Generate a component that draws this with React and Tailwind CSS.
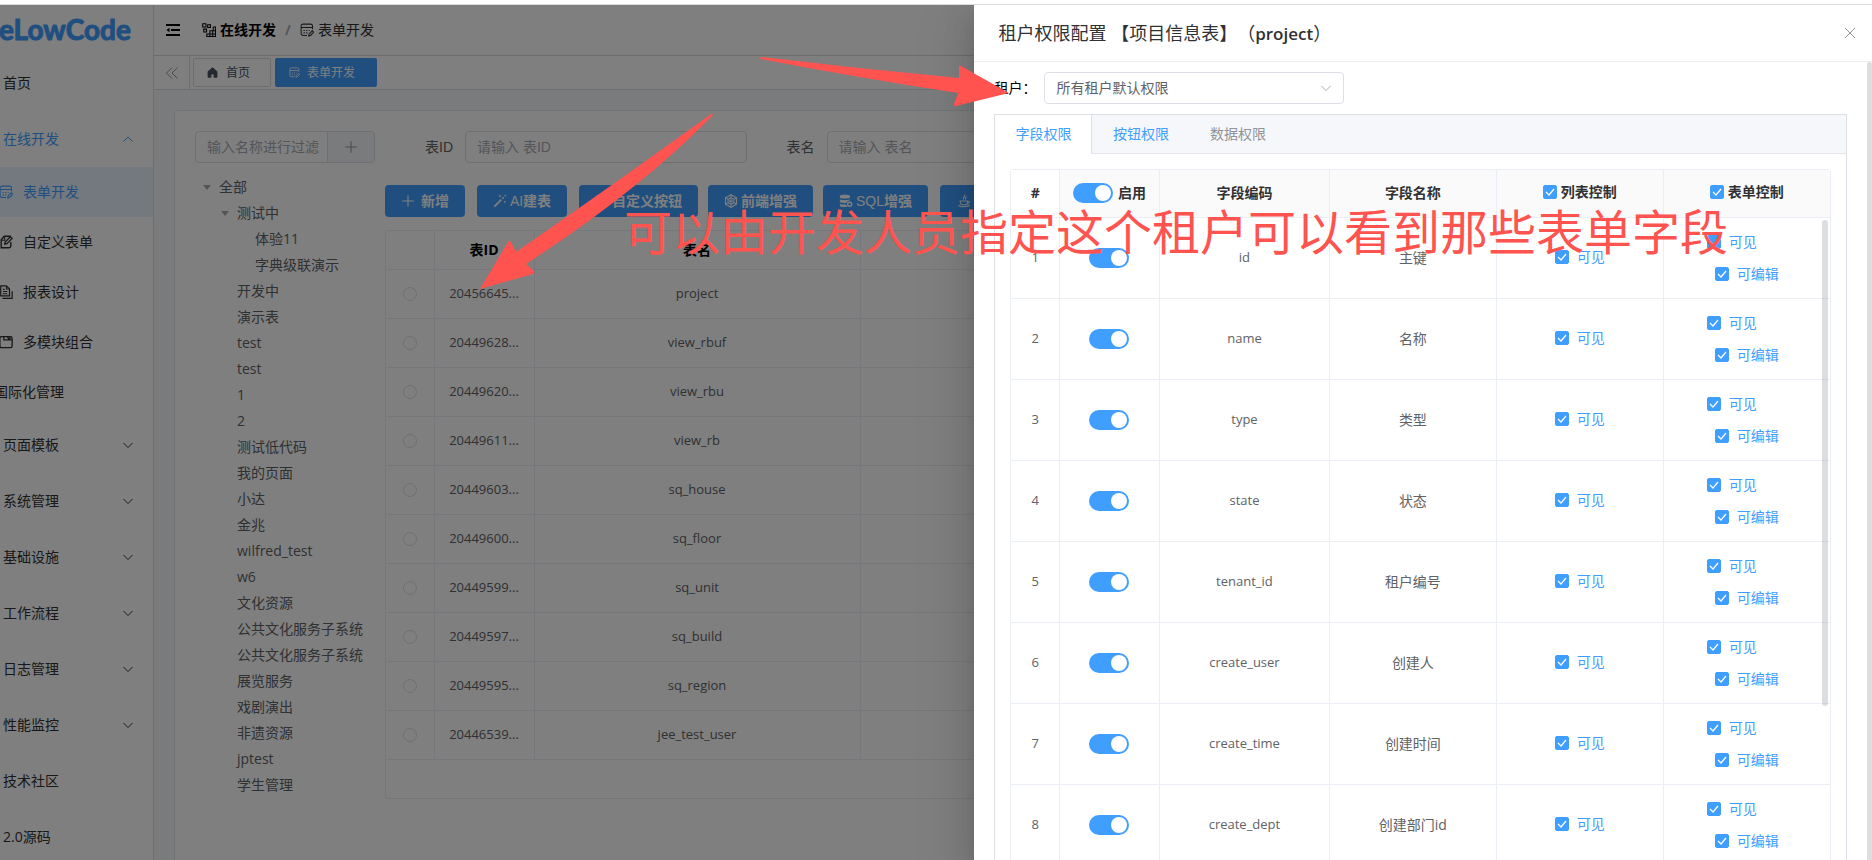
import React, { useState } from "react";

const SIDEBAR_TOP = [
  { name: "表单开发", icon: "form", active: true },
  { name: "自定义表单", icon: "edit" },
  { name: "报表设计", icon: "report" },
  { name: "多模块组合", icon: "module" },
];

const SIDEBAR_REST = [
  { name: "页面模板", arrow: true },
  { name: "系统管理", arrow: true },
  { name: "基础设施", arrow: true },
  { name: "工作流程", arrow: true },
  { name: "日志管理", arrow: true },
  { name: "性能监控", arrow: true },
  { name: "技术社区" },
  { name: "2.0源码" },
];

const TREE = [
  "开发中", "演示表", "test", "test", "1", "2", "测试低代码", "我的页面", "小达", "金兆",
  "wilfred_test", "w6", "文化资源", "公共文化服务子系统", "公共文化服务子系统",
  "展览服务", "戏剧演出", "非遗资源", "jptest", "学生管理",
];

const TABLES = [
  ["20456645...", "project"],
  ["20449628...", "view_rbuf"],
  ["20449620...", "view_rbu"],
  ["20449611...", "view_rb"],
  ["20449603...", "sq_house"],
  ["20449600...", "sq_floor"],
  ["20449599...", "sq_unit"],
  ["20449597...", "sq_build"],
  ["20449595...", "sq_region"],
  ["20446539...", "jee_test_user"],
];

const FIELDS = [
  ["id", "主键"],
  ["name", "名称"],
  ["type", "类型"],
  ["state", "状态"],
  ["tenant_id", "租户编号"],
  ["create_user", "创建人"],
  ["create_time", "创建时间"],
  ["create_dept", "创建部门id"],
];

const BUTTONS = [
  { name: "新增", icon: "plus", cls: "w-20 mr-3" },
  { prefix: "AI", name: "建表", icon: "wand", cls: "w-[90px] mr-3" },
  { name: "自定义按钮", icon: "button", cls: "w-[119px] mr-[10px]" },
  { name: "前端增强", icon: "hex", cls: "w-[105px] mr-[10px]" },
  { prefix: "SQL", name: "增强", icon: "sql", cls: "w-[105px] mr-3" },
  { prefix: "JAVA", name: "增强", icon: "java", cls: "w-[112px]" },
];

const ICONS = {
  form: (
    <>
      <path d="M14.300 7V3.500A2.200 2.200 0 0 0 12.100 1.300H3.500A2.200 2.200 0 0 0 1.300 3.500v8.500a2.200 2.200 0 0 0 2.200 2.200H8" />
      <path d="M1.500 5.200h12.500M4 8.500h1.500M7 8.500h1.500M10 8.500h1M4 11.300h1.500M7 11.300h1.500" />
      <path d="m10 14.800.4-2.300 3.600-3.600 1.500 1.500-3.400 3.800z" />
    </>
  ),
  edit: (
    <>
      <path d="M13.500 8v4.500a2 2 0 0 1-2 2h-9V5.500l3.500-4h7.500" strokeWidth="1.600" />
      <path d="M6.500 10.500 7 8l6-6 2 2-6 6z" strokeWidth="1.500" />
      <path d="M3 6h3.500V2" />
    </>
  ),
  report: (
    <>
      <path d="M2 1h6.500L12 4.500V12.500H2z" strokeWidth="1.400" />
      <path d="M8.500 1v3.500H12M4.500 5h2M4.500 7.500h5M4.500 10h5" />
      <path d="M4 15.200h11V7" strokeWidth="1.400" />
    </>
  ),
  module: (
    <>
      <rect x="1" y="1.800" width="14" height="12.600" rx="1.800" strokeWidth="1.500" />
      <path d="M5.500 2v3.500h9.300M9.500 2l2.500 3.500M12.500 2v3" strokeWidth="1.500" />
    </>
  ),
  crumb: (
    <>
      <path d="M.8.800h3.700v3.700H.8zM6.500 2h3.200v3.200H6.500zM2 7h3.200v3.200H2z" />
      <path d="M12.800 4.500h2.700v11H5.500v-3h10M9 15.500V8.800h6.500M12.300 15.500V8.800" />
      <path d="M12.800 8.500v-4" />
    </>
  ),
  home: <path d="M8 1 1.500 6.500v8.500h4.300v-5h4.400v5h4.300V6.500z" fill="currentColor" />,
  plus: <path d="M8 1.500v13M1.500 8h13" />,
  wand: (
    <>
      <path d="M1.500 14.500 9.500 6.500" strokeWidth="2" />
      <path d="m10.800 5.200 1.400-1.400" strokeWidth="2" />
      <path d="M8 1v2.600M6.700 2.300h2.600M13.500 8v2M12.500 9h2M14 .8v2M13 1.800h2" strokeWidth="0.900" />
    </>
  ),
  button: (
    <>
      <rect x="1.500" y="2" width="13" height="7" rx="1.500" />
      <circle cx="9.500" cy="10.500" r="4.200" />
      <path d="M7.500 10.500h4" />
    </>
  ),
  hex: (
    <>
      <path d="m8 .8 6.300 3.600v7.200L8 15.200l-6.300-3.600V4.400z" />
      <path d="m8 4.200 3.300 1.900v3.800L8 11.800l-3.300-1.900V6.100z" />
      <circle cx="8" cy="8" r="1.300" />
      <path d="M8 1v3M2 4.500l2.700 1.600M14 4.500l-2.700 1.600M8 15v-3M2 11.500l2.700-1.600M14 11.500l-2.700-1.600" />
    </>
  ),
  sql: (
    <>
      <path d="M1 2.200C1 .4 12.500.4 12.500 2.200V4C12.500 5.600 1 5.600 1 4zM1 6c2 1.400 9.500 1.400 11.500 0v1.500c-2 .2-3.500 1.300-4 2.700-3 .1-6.500-.2-7.500-1.200zM1 11c1.500 1 4.500 1.200 7 1.100.2 1.200.8 2 1.600 2.700C6 15.200 1 15 1 13.500z" fill="currentColor" stroke="none" />
      <circle cx="12.200" cy="11.800" r="2.300" strokeWidth="1.700" />
    </>
  ),
  java: (
    <>
      <path d="M8.500.8c2 2-3 3-1 5.500M11 3.200c-2.500 1-1.500 2-1.200 3.300" />
      <path d="M3.500 8h8.500v2.500c0 1.300-1.500 1.800-4 1.800s-4-.5-4-1.800zM12.200 8.300c3-.6 2.600 2.400-.5 2.700" />
      <path d="M1.500 13c2 2.200 11 2 13-.5" />
    </>
  ),
};

const Icon = ({ name, className = "size-[14px]" }) => (
  <svg viewBox="0 0 16 16" className={`shrink-0 ${className}`} fill="none" stroke="currentColor" strokeWidth="1.200">
    {ICONS[name]}
  </svg>
);

const Chevron = ({ up, className = "" }) => (
  <svg viewBox="0 0 12 12" className={`size-3 shrink-0 ${className}`} fill="none" stroke="currentColor">
    <path d={up ? "M1.500 8.500 6 4l4.500 4.500" : "M1.500 4 6 8.500 10.500 4"} />
  </svg>
);

const Switch = ({ label }) => (
  <input
    type="checkbox"
    role="switch"
    aria-label={label}
    defaultChecked
    className="h-5 w-10 shrink-0 appearance-none rounded-full bg-[#dcdfe6] p-[2px] align-middle before:block before:size-4 before:rounded-full before:bg-white checked:bg-[#409eff] checked:before:ml-5"
  />
);

const Check = ({ children, className = "gap-2 text-[#409eff]" }) => (
  <label className={`inline-flex items-center ${className}`}>
    <span className="relative size-[14px] shrink-0">
      <input
        type="checkbox"
        defaultChecked
        className="block size-[14px] appearance-none rounded-[2px] border border-[#dcdfe6] checked:border-[#409eff] checked:bg-[#409eff]"
      />
      <svg viewBox="0 0 14 14" className="pointer-events-none absolute inset-0" fill="none" stroke="#fff" strokeWidth="1.200">
        <path d="m3 7 3 3 5-6" />
      </svg>
    </span>
    <span>{children}</span>
  </label>
);

const Sidebar = () => (
  <aside className="w-[154px] shrink-0 overflow-hidden border-r border-[#dcdfe6] text-[#303133]">
    <div className="h-[50px]">
      <svg className="h-[50px] w-full" aria-label="eLowCode">
        <text
          x="-1"
          y="35"
          fill="#409eff"
          stroke="#409eff"
          strokeWidth="1"
          strokeLinejoin="round"
          className="font-['Lato'] text-[28px] font-bold"
        >
          eLowCode
        </text>
      </svg>
    </div>
    <nav>
      <a href="#home" className="flex h-14 items-center pl-[3px]">首页</a>
      <a href="#online" className="flex h-14 items-center justify-between pl-[3px] pr-[19px] text-[#409eff]">
        在线开发
        <Chevron up />
      </a>
      {SIDEBAR_TOP.map((m) => (
        <a
          key={m.name}
          href={`#${m.icon}`}
          className={`flex h-[50px] items-center gap-[10px] ${m.active ? "bg-[#e8f3ff] text-[#409eff]" : ""}`}
        >
          <Icon name={m.icon} className="-ml-px size-[14px]" />
          {m.name}
        </a>
      ))}
      <a href="#i18n" className="-ml-[6px] flex h-[50px] items-center">国际化管理</a>
      {SIDEBAR_REST.map((m) => (
        <a key={m.name} href={`#${m.name}`} className="flex h-14 items-center justify-between pl-[3px] pr-[19px]">
          {m.name}
          {m.arrow && <Chevron />}
        </a>
      ))}
    </nav>
  </aside>
);

const TopBar = () => (
  <>
    <header className="flex h-[51px] items-center border-b border-[#d8dce5] pl-3 text-[#303133]">
      <button type="button" aria-label="折叠菜单" className="mr-[22px]">
        <svg viewBox="0 0 14 14" className="size-[14px]" fill="none" stroke="#000" strokeWidth="2">
          <path d="M0 2h14M5 7h9M0 12h14" />
          <path d="M3.500 4.800.5 7l3 2.200z" fill="#000" stroke="none" />
        </svg>
      </button>
      <Icon name="crumb" className="mr-1 size-[14px] text-black" />
      <a href="#online" className="font-bold text-black">在线开发</a>
      <span className="w-6 text-center font-bold text-[#a8abb2]">/</span>
      <Icon name="form" className="mr-1 size-[14px]" />
      <span>表单开发</span>
    </header>
    <div className="flex h-[34px] items-center border-b border-[#d8dce5] text-xs">
      <button type="button" aria-label="向左" className="flex h-full w-9 items-center justify-center border-r border-[#d8dce5] text-[#909399]">
        <svg viewBox="0 0 12 12" className="size-3" fill="none" stroke="currentColor">
          <path d="M6 .5.500 6 6 11.500M11.500.5 6 6l5.500 5.500" />
        </svg>
      </button>
      <a href="#home" className="ml-[3px] flex h-[29px] w-[78px] items-center gap-2 rounded-[2px] border border-[#d8dce5] pl-[13px] text-[#495060]">
        <Icon name="home" className="size-[11px]" />
        首页
      </a>
      <a href="#form" className="ml-1 flex h-[29px] w-[102px] items-center gap-[7px] rounded-[2px] bg-[#409eff] pl-[14px] text-white">
        <Icon name="form" className="size-[11px]" />
        表单开发
      </a>
    </div>
  </>
);

const TreeRow = ({ name, level, open }) => (
  <li className={`flex h-[26px] items-center ${level === 0 ? "pl-2" : level === 1 ? "pl-[26px]" : "pl-[44px]"}`}>
    <span className="w-4">
      {open && (
        <svg viewBox="0 0 8 5" className="h-[5px] w-2" fill="#a8abb2">
          <path d="M0 0h8L4 5z" />
        </svg>
      )}
    </span>
    {name}
  </li>
);

const TreePanel = () => (
  <div className="w-[180px] shrink-0 text-[#606266]">
    <div className="mb-[11px] flex h-8 overflow-hidden rounded border border-[#dcdfe6]">
      <input
        aria-label="过滤"
        placeholder="输入名称进行过滤"
        className="min-w-0 flex-1 pl-[11px] font-['Liberation_Sans','Noto_Sans_CJK_SC',sans-serif] placeholder:text-[#a8abb2]"
      />
      <button type="button" aria-label="添加" className="flex w-[47px] items-center justify-center border-l border-[#dcdfe6] bg-[#f5f7fa] text-[#909399]">
        <Icon name="plus" />
      </button>
    </div>
    <ul>
      <TreeRow name="全部" level={0} open />
      <TreeRow name="测试中" level={1} open />
      <TreeRow name="体验11" level={2} />
      <TreeRow name="字典级联演示" level={2} />
      {TREE.map((t, i) => (
        <TreeRow key={i} name={t} level={1} />
      ))}
    </ul>
  </div>
);

const SearchItem = ({ id, label }) => (
  <div className="flex items-center">
    <label htmlFor={id} className="w-20 shrink-0 pr-3 text-right text-[#606266]">{label}</label>
    <input
      id={id}
      placeholder={`请输入 ${label}`}
      className="h-8 min-w-0 flex-1 rounded border border-[#dcdfe6] px-[11px] placeholder:text-[#a8abb2]"
    />
  </div>
);

const ListPanel = () => (
  <div className="min-w-0 flex-1">
    <form className="mb-[22px] grid grid-cols-4 font-['Liberation_Sans','Noto_Sans_CJK_SC',sans-serif]">
      <SearchItem id="tableId" label="表ID" />
      <SearchItem id="tableName" label="表名" />
    </form>
    <div className="mb-[13px] flex">
      {BUTTONS.map((b) => (
        <button
          key={b.icon}
          type="button"
          className={`flex h-8 items-center justify-center rounded bg-[#409eff] font-['Liberation_Sans','Noto_Sans_CJK_SC',sans-serif] text-white ${b.icon === "plus" ? "gap-[6px]" : "gap-[3px]"} ${b.cls}`}
        >
          <Icon name={b.icon} />
          <span>
            {b.prefix}
            <b>{b.name}</b>
          </span>
        </button>
      ))}
    </div>
    <div className="rounded border border-[#ebeef5]">
      <table className="w-full table-fixed border-collapse text-center text-[#606266]">
        <colgroup>
          <col className="w-12" />
          <col className="w-[100px]" />
          <col className="w-[326px]" />
          <col />
        </colgroup>
        <thead>
          <tr className="h-[38px] border-b border-[#ebeef5] text-black">
            <th className="border-r border-[#ebeef5]" />
            <th className="border-r border-[#ebeef5]">表ID</th>
            <th className="border-r border-[#ebeef5]">表名</th>
            <th />
          </tr>
        </thead>
        <tbody>
          {TABLES.map(([id, name]) => (
            <tr key={id} className="h-[49px] border-b border-[#ebeef5]">
              <td className="border-r border-[#ebeef5]">
                <input
                  type="radio"
                  name="row"
                  aria-label={name}
                  className="mx-auto block size-[14px] appearance-none rounded-full border border-[#dcdfe6]"
                />
              </td>
              <td className="border-r border-[#ebeef5] text-[13px]">{id}</td>
              <td className="border-r border-[#ebeef5] text-[13px]">{name}</td>
              <td />
            </tr>
          ))}
        </tbody>
      </table>
      <div className="h-[38px]" />
    </div>
  </div>
);

const PermTable = () => (
  <div className="relative rounded-t border-x border-t border-[#ebeef5]">
    <table className="w-full table-fixed border-collapse text-center text-[#606266]">
      <colgroup>
        <col className="w-12" />
        <col className="w-[100px]" />
        <col className="w-[170px]" />
        <col />
        <col />
        <col />
      </colgroup>
      <thead>
        <tr className="h-[47px] border-b border-[#ebeef5] bg-[#fafafa] text-[#303133]">
          <th className="border-r border-[#ebeef5] bg-white">#</th>
          <th className="border-r border-[#ebeef5]">
            <span className="flex items-center justify-center gap-[5px]">
              <Switch label="全部启用" />
              启用
            </span>
          </th>
          <th className="border-r border-[#ebeef5]">字段编码</th>
          <th className="border-r border-[#ebeef5]">字段名称</th>
          <th className="border-r border-[#ebeef5]"><Check className="gap-1">列表控制</Check></th>
          <th><Check className="gap-1">表单控制</Check></th>
        </tr>
      </thead>
      <tbody>
        {FIELDS.map(([code, name], i) => (
          <tr key={code} className="h-[81px] border-b border-[#ebeef5]">
            <td className="border-r border-[#ebeef5] text-[13px]">{i + 1}</td>
            <td className="border-r border-[#ebeef5]"><Switch label={code} /></td>
            <td className="border-r border-[#ebeef5] text-[13px]">{code}</td>
            <td className="border-r border-[#ebeef5]">{name}</td>
            <td className="border-r border-[#ebeef5]"><Check>可见</Check></td>
            <td>
              <div className="flex flex-col items-center">
                <Check className="mr-[30px] h-8 gap-2 text-[#409eff]">可见</Check>
                <Check className="h-8 gap-2 text-[#409eff]">可编辑</Check>
              </div>
            </td>
          </tr>
        ))}
      </tbody>
    </table>
    {/* scroll thumb */}
    <div className="absolute right-[2px] top-[50px] h-[486px] w-[6px] rounded-full bg-[#909399]/30" />
  </div>
);

const Drawer = () => {
  const [tab, setTab] = useState("字段权限");

  return (
    <section className="flex w-[calc(48%-1px)] flex-col bg-white shadow-[0_16px_48px_16px_rgba(0,0,0,0.08),0_12px_32px_rgba(0,0,0,0.12),0_8px_16px_-8px_rgba(0,0,0,0.16)]">
      <header className="flex h-[57px] shrink-0 items-center justify-between border-b border-[#ebeef5] pl-6 pr-[17px]">
        <h2 className="text-lg text-[#303133] [text-spacing-trim:space-all]">
          租户权限配置 【项目信息表】（<span className="text-[17px] font-semibold">project</span>）
        </h2>
        <button type="button" aria-label="关闭" className="text-[#909399]">
          <svg viewBox="0 0 10 10" className="size-[10px]" fill="none" stroke="currentColor">
            <path d="m0 0 10 10M10 0 0 10" />
          </svg>
        </button>
      </header>

      <div className="flex min-h-0 flex-1">
        <div className="min-w-0 flex-1 overflow-hidden px-5 pt-[10px]">
          <div className="mb-[10px] flex items-center text-black">
            <label htmlFor="tenant" className="w-[50px]">租户：</label>
            <div className="relative w-[300px]">
              <select id="tenant" className="h-8 w-full appearance-none rounded border border-[#dcdfe6] pl-[11px] text-[#606266]">
                <option>所有租户默认权限</option>
              </select>
              <Chevron className="pointer-events-none absolute right-3 top-[10px] text-[#a8abb2]" />
            </div>
          </div>

          <div className="border border-[#dcdfe6]">
            <div role="tablist" className="flex h-[39px] bg-[#f5f7fa]">
              {["字段权限", "按钮权限", "数据权限"].map((t) => (
                <button
                  key={t}
                  type="button"
                  role="tab"
                  onClick={() => setTab(t)}
                  className={`w-[97px] border-b ${tab === t ? "border-r border-r-[#dcdfe6] border-b-white bg-white" : "border-b-[#e4e7ed]"} ${t === "数据权限" ? "text-[#909399]" : "text-[#409eff]"}`}
                >
                  {t}
                </button>
              ))}
              <div className="flex-1 border-b border-[#e4e7ed]" />
            </div>
            <div className="p-[15px]">
              <PermTable />
            </div>
          </div>
        </div>
        <div className="w-[5px] shrink-0 rounded-t-full bg-[#dddee0]" />
      </div>
    </section>
  );
};

const Notes = () => (
  <div className="pointer-events-none absolute inset-0 overflow-hidden">
    <svg className="absolute inset-0 h-full w-full" fill="#ff5350">
      <path d="M761 57 Q860 69 959 78 L959 67 Q959 65 961 66 L1009 93 L956 106 Q953 106 954 104 L958 93 Q860 78 761 59 Q759 58 761 57z" />
      <path d="M711 114 Q712 113 713 115 Q640 190 526 264 L534 271 Q535 273 533 274 L480 289 L508 242 Q510 240 511 242 L516 252 Q620 180 711 114z" />
    </svg>
    <p className="absolute left-[624px] top-[202px] whitespace-nowrap text-5xl leading-[60px] text-[#ff5350]">
      可以由开发人员指定这个租户可以看到那些表单字段
    </p>
  </div>
);

const App = () => {
  return (
    <div className="relative flex h-screen flex-col overflow-hidden bg-white font-['Open_Sans','Noto_Sans_CJK_SC',sans-serif] text-sm">
      <div className="h-[5px] shrink-0 border-b border-[#dcdcdc]" />
      <div className="relative flex min-h-0 flex-1">
        <Sidebar />
        <div className="flex min-w-0 flex-1 flex-col">
          <TopBar />
          <main className="min-h-0 flex-1 bg-[#f5f7f9] px-5 pt-5">
            <div className="flex h-[900px] gap-[10px] rounded-t border border-[#e4e7ed] bg-white p-5">
              <TreePanel />
              <ListPanel />
            </div>
          </main>
        </div>
        <div className="absolute inset-0 flex justify-end overflow-hidden bg-black/50">
          <Drawer />
        </div>
      </div>
      <Notes />
    </div>
  );
};

export default App;
